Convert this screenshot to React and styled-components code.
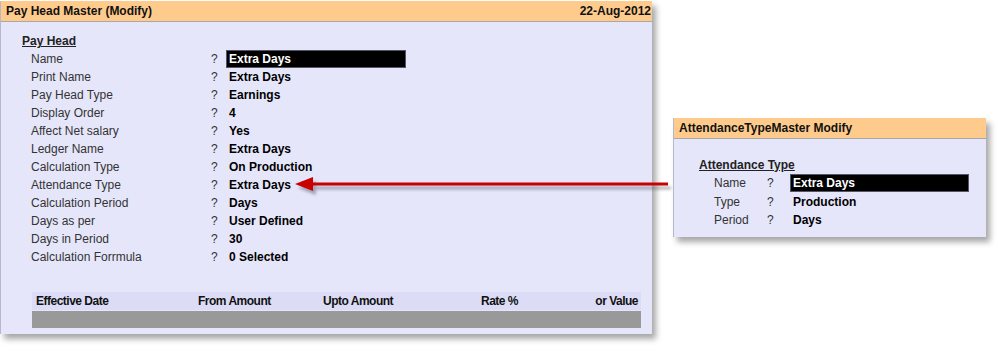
import React from 'react';
import styled, { createGlobalStyle } from 'styled-components';

const GlobalStyle = createGlobalStyle`
  body {
    margin: 0;
    background: #fff;
    font-family: "Liberation Sans", Arial, sans-serif;
  }
`;

const Canvas = styled.div`
  position: relative;
  display: flex;
  align-items: flex-start;
  width: 1002px;
  height: 349px;
  overflow: hidden;
`;

const Panel = styled.div`
  width: ${(p) => p.$width}px;
  margin-top: ${(p) => p.$top}px;
  margin-left: ${(p) => p.$left || 0}px;
  background: #e6e6fa;
  border-left: 1px solid #b8b8c8;
  box-sizing: border-box;
  box-shadow: 4px 5px 6px rgba(0, 0, 0, 0.35);
`;

const Header = styled.div`
  display: flex;
  justify-content: space-between;
  align-items: center;
  height: 20px;
  padding: 0 1px 0 5px;
  background: #ffcb8c;
  border-bottom: 1px solid #a8a8a8;
  font-size: 12px;
  font-weight: bold;
  color: #111;
`;

const Body = styled.div`
  padding: ${(p) => p.$pad};
`;

const SectionTitle = styled.div`
  height: 18px;
  line-height: 18px;
  font-size: 12px;
  font-weight: bold;
  color: #222;
  text-decoration: underline;
`;

const Row = styled.div`
  display: flex;
  height: ${(p) => p.$h || 18}px;
  line-height: 18px;
  font-size: 12px;
  padding-left: ${(p) => p.$indent}px;
`;

const Label = styled.span`
  width: ${(p) => p.$w}px;
  color: #333;
`;

const Ask = styled.span`
  width: ${(p) => p.$w}px;
  color: #333;
`;

const Value = styled.span`
  width: ${(p) => p.$w}px;
  height: 18px;
  padding-left: 2px;
  box-sizing: border-box;
  font-weight: bold;
  color: ${(p) => (p.$active ? '#fff' : '#000')};
  background: ${(p) => (p.$active ? '#000' : 'transparent')};
  border: 1px solid ${(p) => (p.$active ? '#55556a' : 'transparent')};
  line-height: 16px;
`;

const Table = styled.div`
  margin: 26px 11px 0 31px;
`;

const TableHead = styled.div`
  display: grid;
  grid-template-columns: 162px 125px 158px 80px 1fr;
  height: 18px;
  line-height: 18px;
  padding: 0 3px 0 4px;
  background: #dcdcf6;
  font-size: 12px;
  font-weight: bold;
  letter-spacing: -0.5px;
  color: #111;
`;

const HeadCell = styled.span`
  text-align: ${(p) => (p.$right ? 'right' : 'left')};
`;

const TableFill = styled.div`
  height: 17px;
  margin-top: 1px;
  background: #999;
`;

const Arrow = styled.svg`
  position: absolute;
  left: 286px;
  top: 172px;
`;

const payRows = [
  ['Name', 'Extra Days', true],
  ['Print Name', 'Extra Days'],
  ['Pay Head Type', 'Earnings'],
  ['Display Order', '4'],
  ['Affect Net salary', 'Yes'],
  ['Ledger Name', 'Extra Days'],
  ['Calculation Type', 'On Production'],
  ['Attendance Type', 'Extra Days'],
  ['Calculation Period', 'Days'],
  ['Days as per', 'User Defined'],
  ['Days in Period', '30'],
  ['Calculation Forrmula', '0 Selected'],
];

const attRows = [
  ['Name', 'Extra Days', true],
  ['Type', 'Production'],
  ['Period', 'Days'],
];

export default function App() {
  return (
    <>
      <GlobalStyle />
      <Canvas>
        <Panel $width={652} $top={1}>
          <Header>
            <span>Pay Head Master (Modify)</span>
            <span>22-Aug-2012</span>
          </Header>
          <Body $pad="10px 0 6px 0">
            <Row $indent={21}>
              <SectionTitle>Pay Head</SectionTitle>
            </Row>
            {payRows.map(([label, value, active]) => (
              <Row key={label} $indent={30}>
                <Label $w={180}>{label}</Label>
                <Ask $w={15}>?</Ask>
                <Value $w={180} $active={active}>{value}</Value>
              </Row>
            ))}
            <Table>
              <TableHead>
                <HeadCell>Effective Date</HeadCell>
                <HeadCell>From Amount</HeadCell>
                <HeadCell>Upto Amount</HeadCell>
                <HeadCell>Rate %</HeadCell>
                <HeadCell $right>or Value</HeadCell>
              </TableHead>
              <TableFill />
            </Table>
          </Body>
        </Panel>

        <Panel $width={313} $top={118} $left={21}>
          <Header>
            <span>AttendanceTypeMaster Modify</span>
          </Header>
          <Body $pad="17px 0 7px 0">
            <Row $indent={25}>
              <SectionTitle>Attendance Type</SectionTitle>
            </Row>
            {attRows.map(([label, value, active]) => (
              <Row key={label} $indent={40} $h={18.5}>
                <Label $w={53}>{label}</Label>
                <Ask $w={23}>?</Ask>
                <Value $w={179} $active={active}>{value}</Value>
              </Row>
            ))}
          </Body>
        </Panel>

        <Arrow width="390" height="26" viewBox="0 0 390 26">
          <defs>
            <filter id="sh" x="-5%" y="-50%" width="110%" height="200%">
              <feGaussianBlur stdDeviation="1.8" />
            </filter>
          </defs>
          <g filter="url(#sh)" opacity="0.35" transform="translate(3,4)">
            <line x1="22" y1="12" x2="382" y2="12" stroke="#223" strokeWidth="3" />
            <polygon points="9,12 27,5 27,19" fill="#223" />
          </g>
          <line x1="24" y1="12" x2="382" y2="12" stroke="#c80000" strokeWidth="3" />
          <polygon points="9,12 27,5 27,19" fill="#c80000" />
        </Arrow>
      </Canvas>
    </>
  );
}
